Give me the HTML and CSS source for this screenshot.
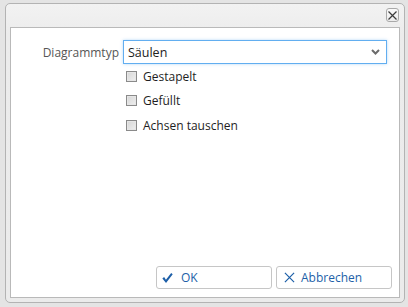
FILE: index.html
```
<!DOCTYPE html>
<html lang="de">
<head>
<meta charset="utf-8">
<link rel="stylesheet" href="styles.css">
</head>
<body>
<div class="dialog">
  <div class="titlebar">
    <button class="close" type="button" aria-label="Schließen">
      <svg width="9" height="9" viewBox="0 0 9 9"><path d="M0.5 0.5 L8.5 8.5 M8.5 0.5 L0.5 8.5" stroke="#3c3c3c" stroke-width="1.2" fill="none"/></svg>
    </button>
  </div>
  <div class="panel">
    <div class="form">
      <label class="label">Diagrammtyp</label>
      <div class="select">
        <span class="select-text">Säulen</span>
        <svg class="chevron" width="9" height="6" viewBox="0 0 9 6"><path d="M1 1 L4.5 4.5 L8 1" stroke="#6b6b6b" stroke-width="2" fill="none"/></svg>
      </div>
      <div class="checks">
        <div class="check"><span class="box"></span><span>Gestapelt</span></div>
        <div class="check"><span class="box"></span><span>Gefüllt</span></div>
        <div class="check"><span class="box"></span><span>Achsen tauschen</span></div>
      </div>
    </div>
    <div class="buttons">
      <button class="btn" type="button">
        <span class="slot"><svg class="icon" width="11" height="12" viewBox="0 0 12 12"><path d="M0.4 6.5 L2.3 5.0 L4.3 7.9 L10.0 0.6 L11.7 1.9 L4.4 11.4 Z" fill="#1d5fa8"/></svg></span>
        <span>OK</span>
      </button>
      <button class="btn" type="button">
        <span class="slot"><svg class="icon icon-x" width="11" height="11" viewBox="0 0 12 12"><path d="M1 1 L11 11 M11 1 L1 11" stroke="#1d5fa8" stroke-width="1.3" fill="none"/></svg></span>
        <span>Abbrechen</span>
      </button>
    </div>
  </div>
</div>
</body>
</html>
```
FILE: styles.css
```
* { box-sizing: border-box; }
html, body { margin: 0; padding: 0; }
body {
  background: #e4e4e4;
  font-family: "Open Sans", "Noto Sans", sans-serif;
  font-size: 12px;
  width: 408px;
  height: 307px;
  padding: 3px 0 0 5px;
}
.dialog {
  width: 400px;
  height: 300px;
  border: 1px solid #b3b3b3;
  border-radius: 5px;
  background: linear-gradient(#f2f2f2, #ececec 30px, #ebebeb);
  display: flex;
  flex-direction: column;
}
.titlebar {
  height: 23px;
  display: flex;
  justify-content: flex-end;
  align-items: flex-start;
  padding: 4px 5px 0 0;
}
.close {
  width: 13px;
  height: 14px;
  padding: 0;
  border: 1px solid #a9a9a9;
  border-radius: 3px;
  background: linear-gradient(#fafafa, #ececec);
  display: flex;
  align-items: center;
  justify-content: center;
}
.close svg { display: block; }
.panel {
  flex: 1;
  margin: 0 4px 4px 4px;
  border: 1px solid #b9b9b9;
  background: #fff;
  display: flex;
  flex-direction: column;
  justify-content: space-between;
  padding: 12px 7px 8px 0;
}
.form {
  display: grid;
  grid-template-columns: 108px 264px;
  column-gap: 4px;
  align-items: center;
}
.label {
  text-align: right;
  color: #565656;
  font-size: 12px;
}
.select {
  height: 24px;
  border: 1px solid #62aef0;
  box-shadow: 0 0 3px rgba(98, 174, 240, 0.45);
  display: flex;
  align-items: center;
  justify-content: space-between;
  padding: 0 6px 0 4px;
  color: #222;
  font-size: 12.5px;
}
.chevron { display: block; }
.checks {
  grid-column: 2;
  display: flex;
  flex-direction: column;
  padding: 0 0 0 3px;
}
.check {
  height: 24.5px;
  display: flex;
  align-items: center;
  gap: 6px;
  color: #1e1e1e;
  font-size: 12px;
}
.box {
  width: 11px;
  height: 11px;
  border: 1px solid #8a8a8a;
  background: linear-gradient(135deg, #d6d6d6, #efefef);
  box-shadow: inset 0 0 0 1px #e6e6e6;
}
.buttons {
  display: flex;
  justify-content: flex-end;
  gap: 4px;
}
.btn {
  width: 116px;
  height: 23px;
  border: 1px solid #c6c6c6;
  border-radius: 3px;
  background: #fff;
  display: flex;
  align-items: center;
  gap: 5px;
  padding: 0 0 0 5px;
  color: #1d5fa8;
  font-family: "Open Sans", "Noto Sans", sans-serif;
  font-size: 12px;
}
.slot {
  width: 14px;
  display: flex;
  align-items: center;
}
.icon { display: block; }
.icon-x { margin-left: 2px; }
```
